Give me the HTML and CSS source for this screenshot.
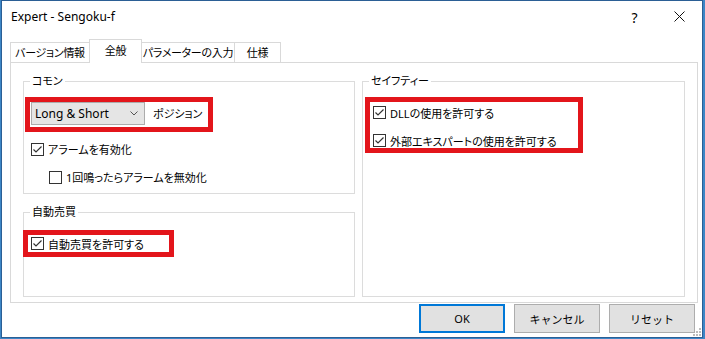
FILE: index.html
```html
<!DOCTYPE html>
<html lang="ja">
  <head>
    <meta charset="UTF-8" />
    <title>Expert - Sengoku-f</title>
    <link rel="stylesheet" href="styles.css">
  </head>
  <body>
    <div class="window">
      <div class="titlebar">
        <span class="title">Expert - Sengoku-f</span>
        <span class="tb-btn help">?</span>
        <span class="tb-btn">
          <svg width="11" height="11" viewBox="0 0 11 11"><path d="M0.5 0.5 L10.5 10.5 M10.5 0.5 L0.5 10.5" stroke="#111" stroke-width="1" fill="none"/></svg>
        </span>
      </div>

      <div class="tabs">
        <div class="tab t1">バージョン情報</div>
        <div class="tab active t2">全般</div>
        <div class="tab t3">パラメーターの入力</div>
        <div class="tab t4">仕様</div>
      </div>

      <div class="panel">
        <div class="col-left">
          <fieldset class="group common">
            <legend>コモン</legend>
            <div class="select-row mark">
              <div class="select">
                <span>Long &amp; Short</span>
                <svg width="8" height="5" viewBox="0 0 8 5"><path d="M0.5 0.5 L4 4 L7.5 0.5" stroke="#555" fill="none"/></svg>
              </div>
              <span class="select-label">ポジション</span>
            </div>
            <label class="check c-alarm">
              <svg class="cb" viewBox="0 0 13 13"><rect x="0.5" y="0.5" width="12" height="12" fill="#fff" stroke="#333"/><path d="M2.5 6.5 L5 9 L10.5 3.5" fill="none" stroke="#333" stroke-width="1.2"/></svg>
              <span>アラームを有効化</span>
            </label>
            <label class="check c-once">
              <svg class="cb" viewBox="0 0 13 13"><rect x="0.5" y="0.5" width="12" height="12" fill="#fff" stroke="#333"/></svg>
              <span>1回鳴ったらアラームを無効化</span>
            </label>
          </fieldset>

          <fieldset class="group auto">
            <legend>自動売買</legend>
            <label class="check mark c-auto">
              <svg class="cb" viewBox="0 0 13 13"><rect x="0.5" y="0.5" width="12" height="12" fill="#fff" stroke="#333"/><path d="M2.5 6.5 L5 9 L10.5 3.5" fill="none" stroke="#333" stroke-width="1.2"/></svg>
              <span>自動売買を許可する</span>
            </label>
          </fieldset>
        </div>

        <fieldset class="group safety">
          <legend>セイフティー</legend>
          <div class="safety-box mark">
            <label class="check">
              <svg class="cb" viewBox="0 0 13 13"><rect x="0.5" y="0.5" width="12" height="12" fill="#fff" stroke="#333"/><path d="M2.5 6.5 L5 9 L10.5 3.5" fill="none" stroke="#333" stroke-width="1.2"/></svg>
              <span>DLLの使用を許可する</span>
            </label>
            <label class="check">
              <svg class="cb" viewBox="0 0 13 13"><rect x="0.5" y="0.5" width="12" height="12" fill="#fff" stroke="#333"/><path d="M2.5 6.5 L5 9 L10.5 3.5" fill="none" stroke="#333" stroke-width="1.2"/></svg>
              <span>外部エキスパートの使用を許可する</span>
            </label>
          </div>
        </fieldset>
      </div>

      <div class="buttons">
        <button class="btn default">OK</button>
        <button class="btn">キャンセル</button>
        <button class="btn">リセット</button>
      </div>

      <svg class="grip" width="8" height="8" viewBox="0 0 8 8">
        <rect x="6" y="0" width="2" height="2" fill="#bcbcbc"/>
        <rect x="3" y="3" width="2" height="2" fill="#bcbcbc"/>
        <rect x="6" y="3" width="2" height="2" fill="#bcbcbc"/>
        <rect x="0" y="6" width="2" height="2" fill="#bcbcbc"/>
        <rect x="3" y="6" width="2" height="2" fill="#bcbcbc"/>
        <rect x="6" y="6" width="2" height="2" fill="#bcbcbc"/>
      </svg>
    </div>
  </body>
</html>
```

FILE: styles.css
```css
/* General styles */
body {
  margin: 0;
  background-color: #3d86c6;
  font-family: "Noto Sans", "Noto Sans CJK JP", sans-serif;
  font-size: 11px;
  font-feature-settings: "palt";
  color: #000;
}

.window {
  position: relative;
  margin-left: 1px;
  width: 702px;
  height: 338px;
  box-sizing: border-box;
  border: 1px solid #2b5f95;
  background-color: #fff;
  display: flex;
  flex-direction: column;
}

/* Title bar */
.titlebar {
  height: 31px;
  display: flex;
  align-items: center;
}

.title {
  flex: 1;
  padding-left: 9px;
  font-size: 12px;
}

.tb-btn {
  width: 45px;
  display: flex;
  justify-content: center;
}

.help {
  font-size: 14px;
  padding-top: 1px;
}

/* Tabs */
.tabs {
  position: relative;
  z-index: 1;
  display: flex;
  align-items: flex-end;
  height: 24px;
  margin: 7px 0 -1px 8px;
}

.tab {
  box-sizing: border-box;
  height: 20px;
  margin-bottom: 1px;
  margin-left: -1px;
  border: 1px solid #d9d9d9;
  border-bottom: none;
  background-color: #fff;
  text-align: center;
  line-height: 19px;
  white-space: nowrap;
  letter-spacing: -0.3px;
}

.tab.active {
  height: 24px;
  margin-bottom: 0;
  line-height: 22px;
}

.t1 { width: 80px; margin-left: 0; }
.t2 { width: 53px; }
.t3 { width: 94px; }
.t4 { width: 47px; }

/* Panel */
.panel {
  box-sizing: border-box;
  width: 688px;
  height: 241px;
  margin-left: 8px;
  padding: 10px 12px 5px 12px;
  border: 1px solid #d9d9d9;
  display: flex;
  gap: 7px;
}

.col-left {
  width: 332px;
  display: flex;
  flex-direction: column;
  gap: 10px;
}

.group {
  box-sizing: border-box;
  margin: 0;
  padding: 0;
  min-width: 0;
  border: 1px solid #dcdcdc;
}

.group legend {
  margin-left: 6px;
  padding: 0 2px;
  line-height: 16px;
}

.common {
  height: 121px;
}

.auto {
  flex: 1;
}

.safety {
  flex: 1;
}

.mark {
  outline: 5px solid #e3151b;
}

.select-row {
  display: flex;
  align-items: flex-start;
  width: 178px;
  height: 25px;
  margin: 13px 0 0 6px;
}

.select {
  box-sizing: border-box;
  width: 114px;
  height: 23px;
  margin-left: 1px;
  padding: 0 6px 0 3px;
  border: 1px solid #acacac;
  background-color: #e5e5e5;
  display: flex;
  align-items: center;
  justify-content: space-between;
  font-size: 12px;
}

.select-label {
  margin-left: 8px;
  line-height: 23px;
}

.check {
  display: flex;
  align-items: center;
  gap: 4px;
  height: 20px;
  white-space: nowrap;
}

.cb {
  width: 13px;
  height: 13px;
  flex-shrink: 0;
}

.c-alarm {
  margin: 12px 0 0 7px;
}

.c-once {
  margin: 8px 0 0 25px;
}

.c-auto {
  width: 141px;
  height: 17px;
  margin: 15px 0 0 4px;
  padding-left: 3px;
  box-sizing: border-box;
}

.safety-box {
  width: 208px;
  margin: 13px 0 0 7px;
  padding: 4px 0 1px 3px;
  box-sizing: border-box;
  display: flex;
  flex-direction: column;
  gap: 15px;
}

.safety-box .check {
  height: 13px;
}

/* Buttons */
.buttons {
  display: flex;
  justify-content: flex-end;
  gap: 9px;
  margin-top: 1px;
  padding-right: 7px;
}

.btn {
  box-sizing: border-box;
  width: 86px;
  height: 29px;
  border: 1px solid #adadad;
  background-color: #e1e1e1;
  font-family: inherit;
  font-size: 11px;
  padding: 0;
}

.btn.default {
  border: 2px solid #0078d7;
}

.grip {
  position: absolute;
  right: 1px;
  bottom: 1px;
}
```
